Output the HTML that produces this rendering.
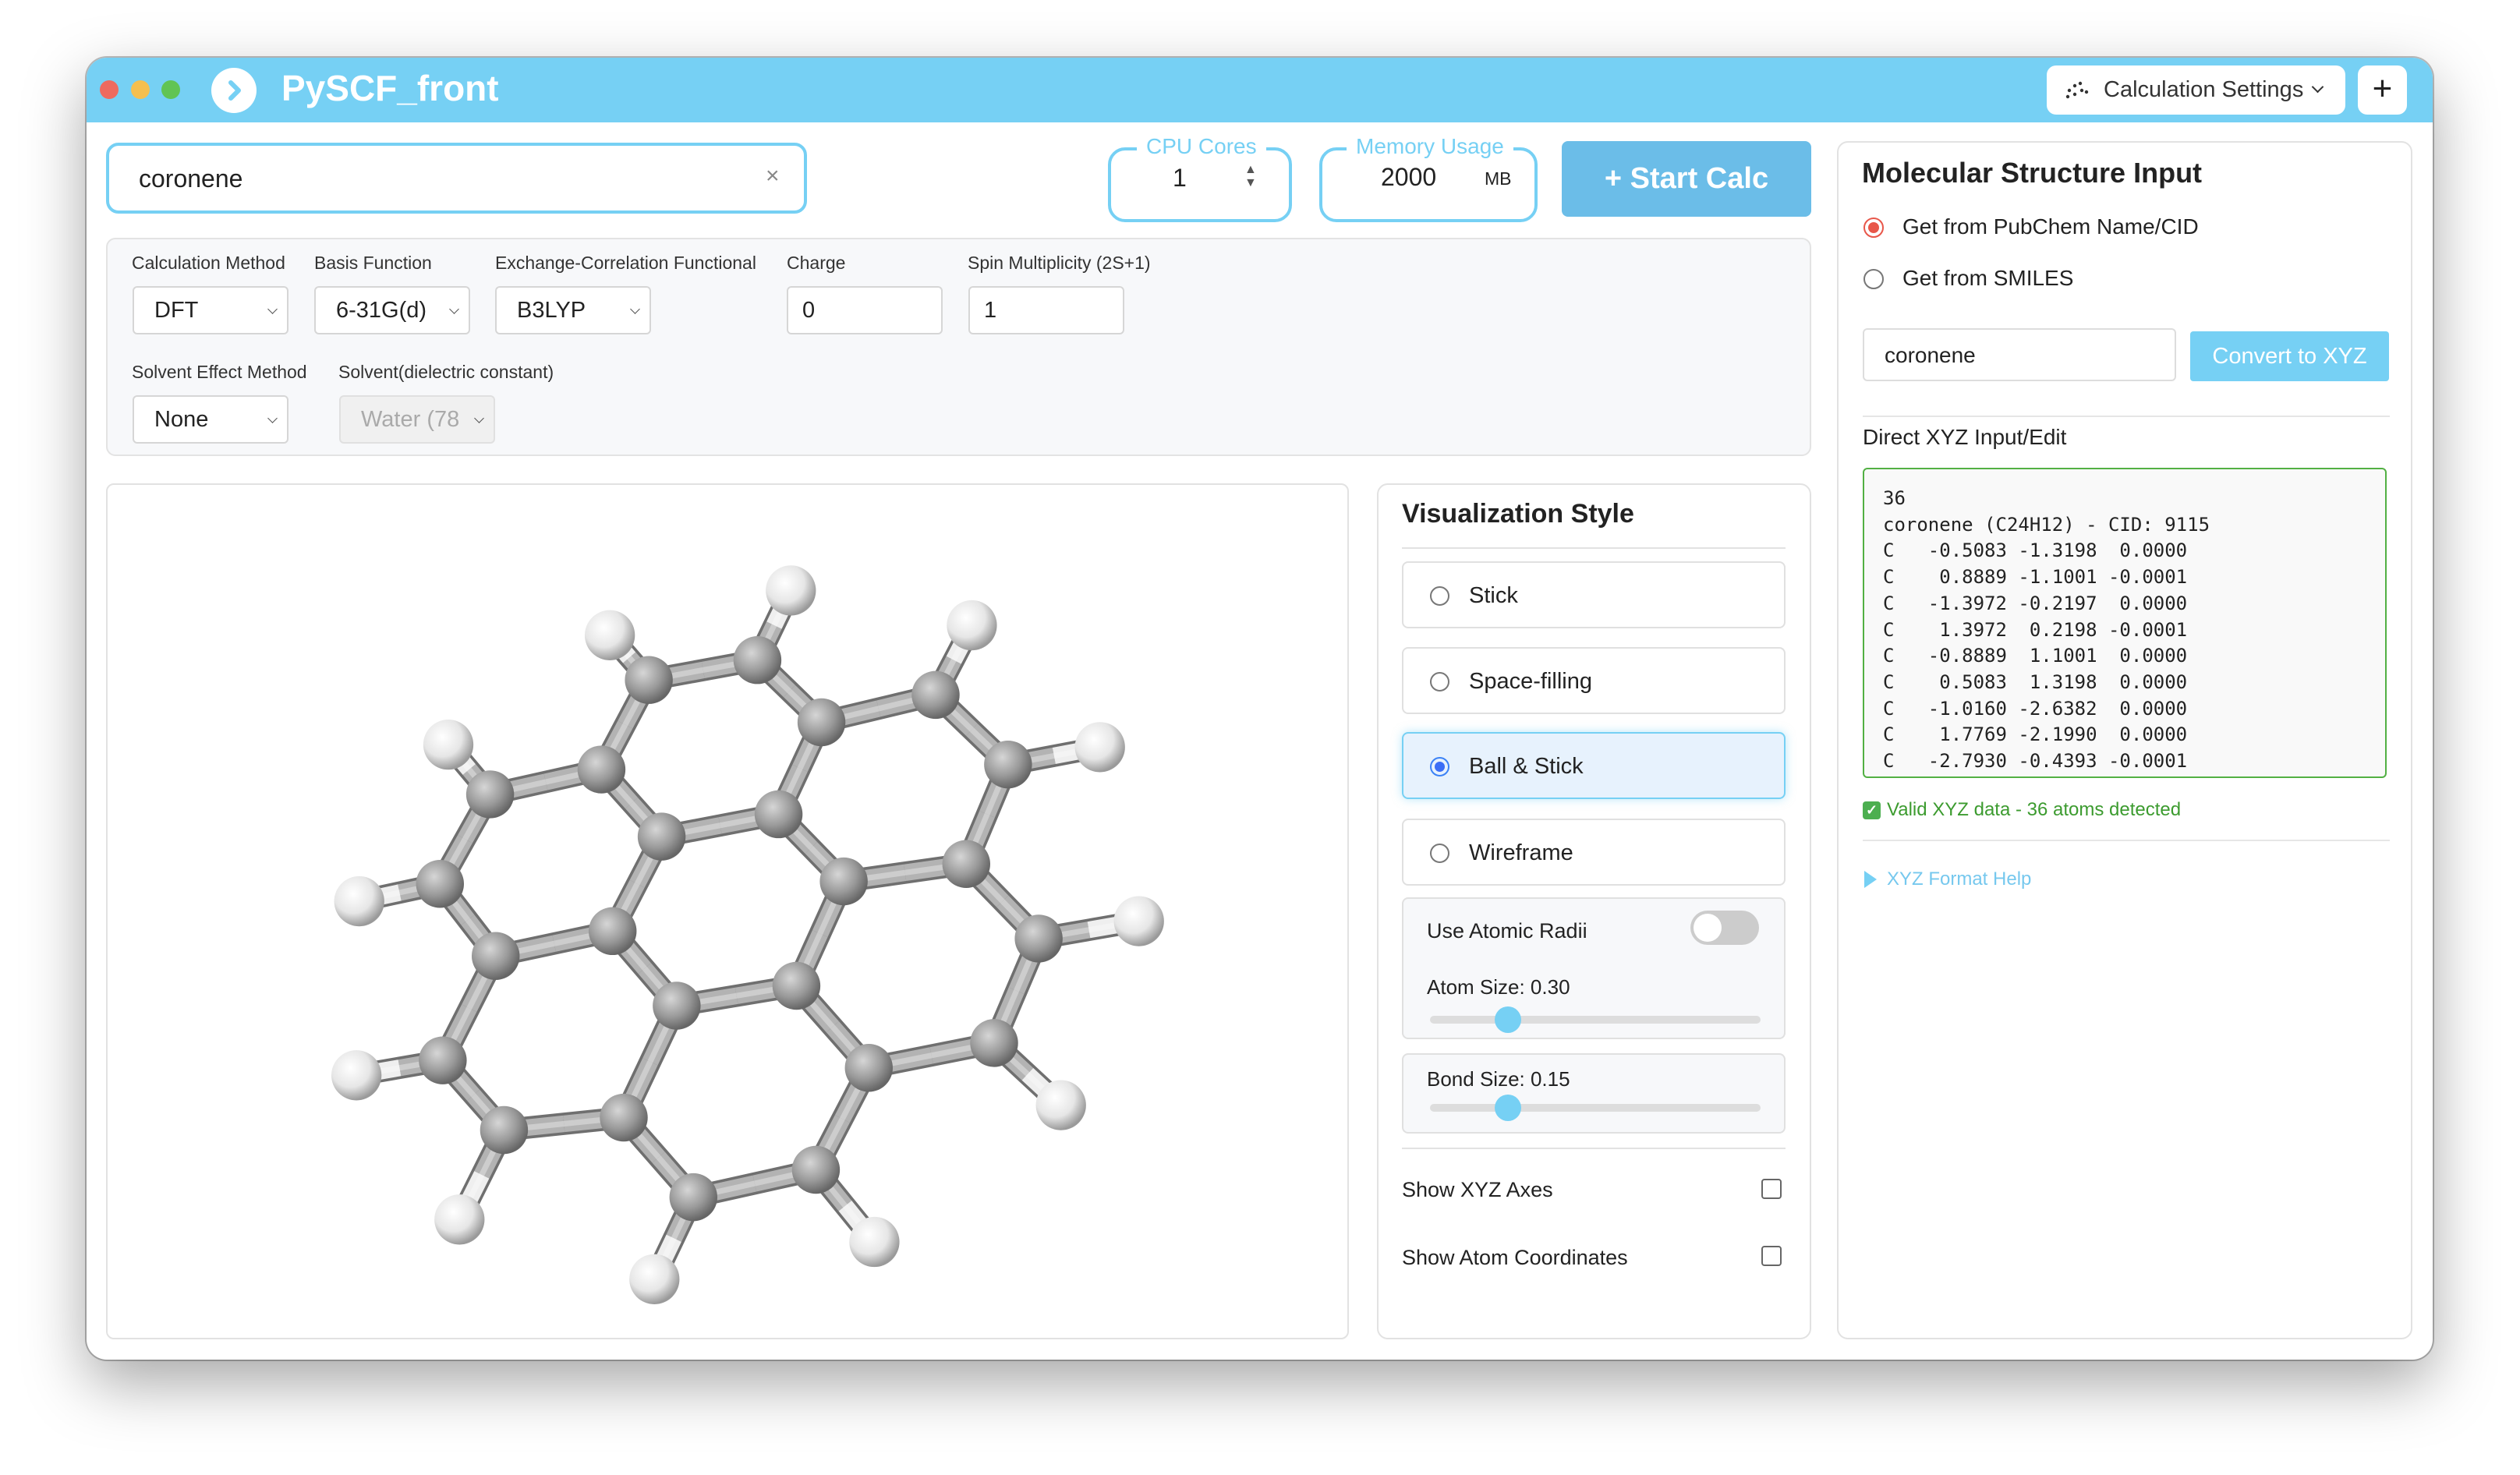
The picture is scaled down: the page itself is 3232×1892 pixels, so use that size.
<!DOCTYPE html>
<html><head><meta charset="utf-8"><style>
*{box-sizing:border-box;margin:0;padding:0}
body{width:3232px;height:1892px;background:#fff;font-family:"Liberation Sans",Arial,sans-serif;color:#222;position:relative;overflow:hidden}
.abs{position:absolute}
#win{left:111px;top:74px;width:3009px;height:1670px;border-radius:26px;background:#fff;box-shadow:0 30px 80px rgba(0,0,0,.35),0 0 0 2px rgba(0,0,0,.25);overflow:hidden}
#bar{left:0;top:0;width:3009px;height:83px;background:#76d0f4}
.dot{width:24px;height:24px;border-radius:50%;top:29px}
.lbl{font-size:23px;color:#333}
.sel{background:#fff;border:2px solid #d6d6d6;border-radius:6px;font-size:29px;padding-left:26px;line-height:58px;height:62px}
.sel.dd:after{content:"";position:absolute;right:14px;top:23px;width:8px;height:8px;border-right:1.5px solid #555;border-bottom:1.5px solid #555;transform:rotate(45deg)}
.panel{background:#fff;border:2px solid #e2e2e2;border-radius:14px}
.opt{left:30px;width:492px;height:86px;border:2px solid #e0e0e0;border-radius:8px;background:#fff;font-size:29px}
.opt .r{position:absolute;left:34px;top:30px;width:25px;height:25px;border:2px solid #777;border-radius:50%}
.opt span{position:absolute;left:84px;top:26px}
.mono{font-family:"DejaVu Sans Mono","Liberation Mono",monospace;font-size:24px;line-height:33.7px;white-space:pre;color:#222}
</style></head><body>
<div id="win" class="abs">
 <div id="bar" class="abs">
  <div class="abs dot" style="left:17px;background:#ee6a5f"></div>
  <div class="abs dot" style="left:57px;background:#f4bf4f"></div>
  <div class="abs dot" style="left:96px;background:#61c454"></div>
  <div class="abs" style="left:160px;top:13px;width:58px;height:58px;border-radius:50%;background:#fff"></div>
  <svg class="abs" style="left:160px;top:13px" width="58" height="58"><path d="M25 19 L35 29 L25 39" fill="none" stroke="#76d0f4" stroke-width="6" stroke-linecap="round" stroke-linejoin="round"/></svg>
  <div class="abs" style="left:250px;top:12px;font-size:46px;font-weight:bold;color:#fff">PySCF_front</div>
  <div class="abs" style="left:2514px;top:10px;width:383px;height:63px;background:#fff;border-radius:12px;font-size:29px">
   <svg class="abs" style="left:24px;top:20px" width="32" height="24"><g fill="#333"><circle cx="3" cy="20" r="2.2"/><circle cx="5" cy="12" r="2.2"/><circle cx="12" cy="17" r="2.2"/><circle cx="12" cy="6" r="2.2"/><circle cx="19" cy="3" r="2.2"/><circle cx="21" cy="12" r="2.2"/><circle cx="27" cy="14" r="2.2"/></g></svg>
   <span class="abs" style="left:73px;top:15px;color:#333">Calculation Settings</span>
   <div class="abs" style="left:342px;top:22px;width:11px;height:11px;border-right:2.5px solid #333;border-bottom:2.5px solid #333;transform:rotate(45deg)"></div>
  </div>
  <div class="abs" style="left:2913px;top:10px;width:63px;height:63px;background:#fff;border-radius:12px;font-size:44px;text-align:center;line-height:60px;color:#222">+</div>
 </div>

 <div class="abs" style="left:25px;top:109px;width:899px;height:91px;border:4px solid #76d0f4;border-radius:16px;font-size:32px">
  <span class="abs" style="left:38px;top:24px">coronene</span>
  <span class="abs" style="left:842px;top:22px;color:#888;font-size:30px">×</span>
 </div>
 <div class="abs" style="left:1310px;top:115px;width:236px;height:96px;border:4px solid #76d0f4;border-radius:22px"></div>
 <div class="abs" style="left:1347px;top:98px;background:#fff;padding:0 12px;font-size:28px;color:#76d0f4">CPU Cores</div>
 <div class="abs" style="left:1393px;top:136px;font-size:32px">1</div>
 <div class="abs" style="left:1485px;top:135px;font-size:16px;color:#555;line-height:17px">▲<br>▼</div>
 <div class="abs" style="left:1581px;top:115px;width:280px;height:96px;border:4px solid #76d0f4;border-radius:22px"></div>
 <div class="abs" style="left:1616px;top:98px;background:#fff;padding:0 12px;font-size:28px;color:#76d0f4">Memory Usage</div>
 <div class="abs" style="left:1660px;top:135px;font-size:32px">2000</div>
 <div class="abs" style="left:1793px;top:142px;font-size:23px">MB</div>
 <div class="abs" style="left:1892px;top:107px;width:320px;height:97px;background:#6bbde8;border-radius:8px;color:#fff;font-weight:bold;font-size:38px;text-align:center;line-height:97px">+ Start Calc</div>

 <div class="abs" style="left:25px;top:231px;width:2187px;height:280px;background:#f7f8fa;border:2px solid #e3e3e3;border-radius:12px">
  <div class="abs lbl" style="left:31px;top:17px">Calculation Method</div>
  <div class="abs lbl" style="left:265px;top:17px">Basis Function</div>
  <div class="abs lbl" style="left:497px;top:17px">Exchange-Correlation Functional</div>
  <div class="abs lbl" style="left:871px;top:17px">Charge</div>
  <div class="abs lbl" style="left:1103px;top:17px">Spin Multiplicity (2S+1)</div>
  <div class="abs sel dd" style="left:32px;top:60px;width:200px">DFT</div>
  <div class="abs sel dd" style="left:265px;top:60px;width:200px">6-31G(d)</div>
  <div class="abs sel dd" style="left:497px;top:60px;width:200px">B3LYP</div>
  <div class="abs sel" style="left:871px;top:60px;width:200px;padding-left:18px">0</div>
  <div class="abs sel" style="left:1104px;top:60px;width:200px;padding-left:18px">1</div>
  <div class="abs lbl" style="left:31px;top:157px">Solvent Effect Method</div>
  <div class="abs lbl" style="left:296px;top:157px">Solvent(dielectric constant)</div>
  <div class="abs sel dd" style="left:32px;top:200px;width:200px">None</div>
  <div class="abs sel dd" style="left:297px;top:200px;width:200px;background:#f0f0f0;color:#aaa;border-color:#e0e0e0">Water (78</div>
 </div>

 <div class="abs panel" style="left:25px;top:546px;width:1594px;height:1098px;border-radius:10px"></div>
 <svg class="abs" style="left:289px;top:626px" width="1120" height="1000" viewBox="0 0 1568 1400">
  <defs>
   <radialGradient id="gc" cx="38%" cy="35%" r="65%"><stop offset="0" stop-color="#d6d6d6"/><stop offset=".6" stop-color="#999"/><stop offset="1" stop-color="#666"/></radialGradient>
   <radialGradient id="gh" cx="38%" cy="35%" r="65%"><stop offset="0" stop-color="#fff"/><stop offset=".6" stop-color="#e6e6e6"/><stop offset="1" stop-color="#9a9a9a"/></radialGradient>
  </defs>
  <g id="bonds"></g>
  <g id="atoms"></g>
 </svg>

 <div class="abs panel" style="left:1655px;top:546px;width:557px;height:1098px">
  <div class="abs" style="left:30px;top:18px;font-size:34px;font-weight:bold">Visualization Style</div>
  <div class="abs" style="left:30px;top:80px;width:492px;height:2px;background:#e2e2e2"></div>
  <div class="abs opt" style="top:98px"><div class="r"></div><span>Stick</span></div>
  <div class="abs opt" style="top:208px"><div class="r"></div><span>Space-filling</span></div>
  <div class="abs opt" style="top:317px;background:#e7f2fd;border-color:#76d0f4;box-shadow:0 0 12px rgba(118,208,244,.5)"><div class="r" style="border-color:#3b82f6"><div style="position:absolute;left:4px;top:4px;width:13px;height:13px;border-radius:50%;background:#3b6ef6"></div></div><span>Ball &amp; Stick</span></div>
  <div class="abs opt" style="top:428px"><div class="r"></div><span>Wireframe</span></div>
  <div class="abs" style="left:30px;top:529px;width:492px;height:182px;background:#f7f8fa;border:2px solid #e0e0e0;border-radius:8px;font-size:27px">
   <span class="abs" style="left:30px;top:26px">Use Atomic Radii</span>
   <div class="abs" style="left:368px;top:15px;width:88px;height:44px;border-radius:22px;background:#ccc"><div style="position:absolute;left:4px;top:4px;width:36px;height:36px;border-radius:50%;background:#fff"></div></div>
   <span class="abs" style="left:30px;top:98px;font-size:26px">Atom Size: 0.30</span>
   <div class="abs" style="left:34px;top:150px;width:424px;height:10px;border-radius:5px;background:#ddd"></div>
   <div class="abs" style="left:117px;top:138px;width:34px;height:34px;border-radius:50%;background:#76d0f4"></div>
  </div>
  <div class="abs" style="left:30px;top:729px;width:492px;height:103px;background:#f7f8fa;border:2px solid #e0e0e0;border-radius:8px">
   <span class="abs" style="left:30px;top:16px;font-size:26px">Bond Size: 0.15</span>
   <div class="abs" style="left:34px;top:63px;width:424px;height:10px;border-radius:5px;background:#ddd"></div>
   <div class="abs" style="left:117px;top:51px;width:34px;height:34px;border-radius:50%;background:#76d0f4"></div>
  </div>
  <div class="abs" style="left:30px;top:850px;width:492px;height:2px;background:#e2e2e2"></div>
  <div class="abs" style="left:30px;top:889px;font-size:27px">Show XYZ Axes</div>
  <div class="abs" style="left:491px;top:890px;width:26px;height:26px;border:2px solid #666;border-radius:4px"></div>
  <div class="abs" style="left:30px;top:976px;font-size:27px">Show Atom Coordinates</div>
  <div class="abs" style="left:491px;top:976px;width:26px;height:26px;border:2px solid #666;border-radius:4px"></div>
 </div>

 <div class="abs panel" style="left:2245px;top:107px;width:738px;height:1537px">
  <div class="abs" style="left:30px;top:18px;font-size:36px;font-weight:bold">Molecular Structure Input</div>
  <div class="abs" style="left:32px;top:96px;width:26px;height:26px;border:2px solid #e8574a;border-radius:50%"><div style="position:absolute;left:4px;top:4px;width:14px;height:14px;border-radius:50%;background:#e8574a"></div></div>
  <div class="abs" style="left:82px;top:92px;font-size:28px">Get from PubChem Name/CID</div>
  <div class="abs" style="left:32px;top:162px;width:26px;height:26px;border:2px solid #777;border-radius:50%"></div>
  <div class="abs" style="left:82px;top:158px;font-size:28px">Get from SMILES</div>
  <div class="abs" style="left:31px;top:238px;width:402px;height:68px;border:2px solid #ddd;border-radius:6px;font-size:28px;padding:17px 0 0 26px">coronene</div>
  <div class="abs" style="left:451px;top:242px;width:255px;height:64px;background:#76d0f4;border-radius:4px;color:#fff;font-size:29px;text-align:center;line-height:64px">Convert to XYZ</div>
  <div class="abs" style="left:31px;top:350px;width:676px;height:2px;background:#e6e6e6"></div>
  <div class="abs" style="left:31px;top:362px;font-size:28px">Direct XYZ Input/Edit</div>
  <div class="abs" style="left:31px;top:417px;width:672px;height:398px;border:2.5px solid #52b043;border-radius:6px;background:#f9f9f9;overflow:hidden">
   <div class="abs mono" style="left:24px;top:21px">36
coronene (C24H12) - CID: 9115
C   -0.5083 -1.3198  0.0000
C    0.8889 -1.1001 -0.0001
C   -1.3972 -0.2197  0.0000
C    1.3972  0.2198 -0.0001
C   -0.8889  1.1001  0.0000
C    0.5083  1.3198  0.0000
C   -1.0160 -2.6382  0.0000
C    1.7769 -2.1990  0.0000
C   -2.7930 -0.4393 -0.0001</div>
  </div>
  <div class="abs" style="left:31px;top:845px;width:23px;height:23px;background:#4caf50;border-radius:4px;color:#fff;font-size:18px;text-align:center;line-height:23px;font-weight:bold">✓</div>
  <div class="abs" style="left:62px;top:842px;font-size:24px;color:#3c9b2f">Valid XYZ data - 36 atoms detected</div>
  <div class="abs" style="left:31px;top:894px;width:676px;height:2px;background:#e6e6e6"></div>
  <svg class="abs" style="left:33px;top:934px" width="16" height="22"><path d="M0 0 L16 11 L0 22Z" fill="#76d0f4"/></svg>
  <div class="abs" style="left:62px;top:931px;font-size:24px;color:#76c8ee">XYZ Format Help</div>
 </div>
</div>
<script>
var C=[[628,585],[838,540],[955,675],[870,885],[655,925],[540,775],
[520,450],[915,355],[1175,640],[1000,1050],[560,1150],[330,825],
[605,270],[800,230],[1120,300],[1250,440],[1305,790],[1225,1000],[905,1255],[685,1310],[345,1175],[235,1035],[230,680],[320,500]];
var H=[[535,180],[860,90],[1185,160],[1415,405],[1485,755],[1345,1125],[1010,1400],[615,1475],[265,1355],[80,1065],[85,715],[245,400]];
C.forEach(function(p){p[1]*=0.893;});H.forEach(function(p){p[1]*=0.893;});
var B=[[0,1],[1,2],[2,3],[3,4],[4,5],[5,0],[0,6],[1,7],[2,8],[3,9],[4,10],[5,11],
[6,12],[12,13],[13,7],[7,14],[14,15],[15,8],[8,16],[16,17],[17,9],[9,18],[18,19],[19,10],[10,20],[20,21],[21,11],[11,22],[22,23],[23,6]];
var ns="http://www.w3.org/2000/svg",bg=document.getElementById("bonds"),ag=document.getElementById("atoms");
function ln(a,b,col,w){var l=document.createElementNS(ns,"line");l.setAttribute("x1",a[0]);l.setAttribute("y1",a[1]);l.setAttribute("x2",b[0]);l.setAttribute("y2",b[1]);l.setAttribute("stroke",col);l.setAttribute("stroke-width",w);bg.appendChild(l);}
function bond(a,b,c1,c2){var m=[(a[0]+b[0])/2,(a[1]+b[1])/2];ln(a,b,"#6f6f6f",40);ln(a,m,c1,30);ln(m,b,c2,30);ln(a,b,"rgba(255,255,255,.35)",10);}
B.forEach(function(p){bond(C[p[0]],C[p[1]],"#b3b3b3","#b3b3b3");});
H.forEach(function(h,i){bond(C[12+i],h,"#b3b3b3","#efefef");});
function at(p,r,f){var c=document.createElementNS(ns,"circle");c.setAttribute("cx",p[0]);c.setAttribute("cy",p[1]);c.setAttribute("r",r);c.setAttribute("fill",f);ag.appendChild(c);}
C.forEach(function(p){at(p,43,"url(#gc)");});
H.forEach(function(p){at(p,45,"url(#gh)");});
</script>
</body></html>
